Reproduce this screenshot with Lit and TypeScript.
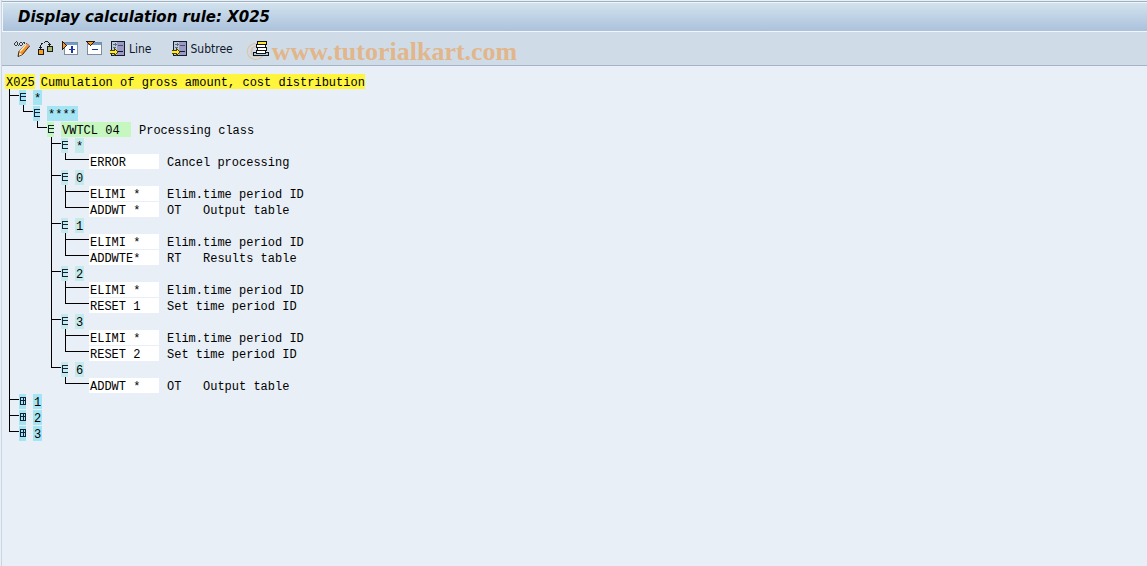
import { LitElement, html, css, svg, nothing } from "lit";
import { customElement, property, state } from "lit/decorators.js";

type Guide = "line" | "blank" | "tee" | "elbow";
interface TreeNode {
  id: string;
  label: string;
  note?: string;
  tone: "cyan" | "green" | "teal" | "leaf";
  open?: boolean;
  children?: TreeNode[];
}

const leaf = (id: string, label: string, note: string): TreeNode => ({ id, label, note, tone: "leaf" });
const group = (label: string, children: TreeNode[]): TreeNode => ({ id: "g" + label, label, tone: "teal", open: true, children });

const TREE: TreeNode[] = [
  {
    id: "all", label: "*", tone: "cyan", open: true, children: [
      {
        id: "wage", label: "****", tone: "cyan", open: true, children: [
          {
            id: "class", label: "VWTCL 04", note: "Processing class", tone: "green", open: true, children: [
              group("*", [leaf("a1", "ERROR", "Cancel processing")]),
              group("0", [leaf("b1", "ELIMI *", "Elim.time period ID"), leaf("b2", "ADDWT *", "OT   Output table")]),
              group("1", [leaf("c1", "ELIMI *", "Elim.time period ID"), leaf("c2", "ADDWTE*", "RT   Results table")]),
              group("2", [leaf("d1", "ELIMI *", "Elim.time period ID"), leaf("d2", "RESET 1", "Set time period ID")]),
              group("3", [leaf("e1", "ELIMI *", "Elim.time period ID"), leaf("e2", "RESET 2", "Set time period ID")]),
              group("6", [leaf("f1", "ADDWT *", "OT   Output table")]),
            ],
          },
        ],
      },
    ],
  },
  { id: "n1", label: "1", tone: "cyan", children: [] },
  { id: "n2", label: "2", tone: "cyan", children: [] },
  { id: "n3", label: "3", tone: "cyan", children: [] },
];

const ICONS: Record<string, unknown> = {
  edit: svg`
    <path d="M2 0h1v1h-1zM1 1h1v1h-1zM0 2h1v2h-1zM1 4h2v1h-2zM3 1h1v3h-1zM4 4h1v1h-1zM5 2h1v2h-1zM6 1h2v1h-2zM8 2h1v2h-1zM6 4h2v1h-2zM9 1h2v1h-2zM10 2h1v1h-1z" fill="#3b3b3b"/>
    <path d="M12.500 2.500l3 2.500-7 8.500-4.500 2 1-5z" fill="#f79325" stroke="#3a2210" shape-rendering="auto"/>
    <path d="M6 10.500l6.500-7.500" stroke="#ffeab8" stroke-width="1.500" fill="none" shape-rendering="auto"/>
    <path d="M12 3.500l1-1 2 2-1 1.500z" fill="#ee8f7c" shape-rendering="auto"/>
    <path d="M5.500 11.500l2.500 2-3 1.200z" fill="#fbeccb" shape-rendering="auto"/>`,
  swap: svg`
    <rect x=".5" y="8.500" width="5" height="5" fill="#f7a020" stroke="#1a1a1a"/>
    <rect x="9.500" y="5.500" width="5" height="5" fill="#a9b86c" stroke="#1a1a1a"/>
    <path d="M2 5h1v1h1v1h-1v1h-1v-1h-1v-1h1zM2 4h1v1h-1zM3 2h1v2h-1zM4 2h1v1h-1zM6 1h1v1h-1zM7 0h3v1h-3zM10 1h1v1h-1zM11 2h1v1h-1zM10 3h3v1h-3zM11 4h1v1h-1z" fill="#1a1a1a"/>`,
  expand: svg`
    <rect x="2.500" y="1.500" width="13" height="12" fill="#fff" stroke="#7d8da0"/>
    <rect x="3" y="2" width="12" height="2" fill="#6f9bd2"/>
    <path d="M9 5h2v3h2v1h-2v3h-2v-3h-2v-1h2z" fill="#1d35a8"/>
    <path d="M0 0h1v1h1v1h1v1h1v1h1v1h-1v1h-1v1h-1v1h-1v1h-1z" fill="#2a1b08"/>
    <path d="M1 2h1v1h1v1h1v1h-1v1h-1v1h-1z" fill="#f79a28"/>`,
  collapse: svg`
    <rect x="1.500" y="1.500" width="14" height="12" fill="#fff" stroke="#7d8da0"/>
    <rect x="2" y="2" width="13" height="2" fill="#6f9bd2"/>
    <rect x="6" y="8" width="6" height="1" fill="#1d35a8"/>
    <path d="M0 0h9v1h-1v1h-1v1h-1v1h-1v1h-1v-1h-1v-1h-1v-1h-1v-1h-1z" fill="#2a1b08"/>
    <path d="M2 1h5v1h-1v1h-1v1h-1v-1h-1v-1h-1z" fill="#f79a28"/>`,
  insert: svg`
    <rect x="1" y="0" width="14" height="15" fill="#16182c"/>
    <rect x="2" y="1" width="5" height="13" fill="#bccbdc"/>
    <rect x="7" y="1" width="7" height="13" fill="#9a9ac4"/>
    <path d="M8 10h5v1h-5z" fill="#16182c"/>
    <path d="M8 4h5v1h-5z" fill="#4a4c74"/>
    <path d="M3 3h2v-1h1v1h1v1h-1v1h-1v-1h-2zM3 6h3v1h-3z" fill="#5f6a78"/>
    <path d="M0 9h4v-2h1v1h1v1h1v1h1v2h-1v1h-1v1h-1v1h-1v-2h-4z" fill="#4b4100"/>
    <path d="M0 10h5v-1h1v1h1v2h-1v1h-1v-1h-5z" fill="#ffe92e"/>`,
  stack: svg`
    <rect x="4.500" y=".5" width="9" height="3" fill="#ffe23a" stroke="#111"/>
    <rect x="3.500" y="3.500" width="9" height="3" fill="#fff" stroke="#111"/>
    <rect x="4.500" y="6.500" width="9" height="3" fill="#fff" stroke="#111"/>
    <rect x="3.500" y="9.500" width="9" height="3" fill="#fff" stroke="#111"/>
    <path d="M3.500 11.500h-3v3h15v-3h-3v1h-9z" fill="#a9cdea" stroke="#111"/>`,
};

@customElement("tool-button")
class ToolButton extends LitElement {
  @property() icon = "";
  @property() name = "";
  @property() text = "";
  static styles = css`
    :host { display: block; }
    .btn {
      display: flex; align-items: center; gap: 3px; height: 20px; margin: 0; padding: 0;
      border: 0; background: none; color: #10182c;
      font: 12px/16px "DejaVu Sans Condensed", "DejaVu Sans", sans-serif; cursor: pointer;
    }
    .glyph { display: block; width: 16px; height: 16px; }
  `;
  render() {
    return html`<button class="btn" type="button" aria-label=${this.name} title=${this.name}>
      <svg class="glyph" viewBox="0 0 16 16" shape-rendering="crispEdges" aria-hidden="true">${ICONS[this.icon]}</svg>${this.text ? html`<span>${this.text}</span>` : nothing}
    </button>`;
  }
}

@customElement("rule-tree")
class RuleTree extends LitElement {
  @state() private toggled = new Set<string>();
  static styles = css`
    :host { display: block; font: 12px/16px "Liberation Mono", "Courier New", monospace; color: #000; }
    .root { display: flex; gap: 5px; padding-left: 5px; line-height: 18px; }
    .root-part { height: 15px; padding-left: 1px; background: #fff53d; white-space: pre; }
    .rows { list-style: none; margin: 0; padding: 0 0 0 9px; }
    .row { display: flex; height: 16px; align-items: flex-end; }
    .guide { flex: none; width: 14px; height: 16px; background: no-repeat linear-gradient(#000, #000) 0 0 / 0 0; }
    .line { background-size: 1px 16px; }
    .tee, .elbow {
      width: 10px;
      background-image: linear-gradient(#000, #000), linear-gradient(#000, #000);
      background-position: 0 0, 0 6px;
      background-size: 1px 16px, 100% 1px;
    }
    .elbow { background-size: 1px 7px, 100% 1px; }
    .to-leaf { width: 24px; }
    .toggle { flex: none; width: 7px; height: 15px; margin: 0 7px 0 0; padding: 0; border: 0; display: block; cursor: pointer; }
    .toggle-glyph { display: block; width: 7px; height: 15px; }
    .label { flex: none; height: 15px; box-sizing: border-box; line-height: 18px; padding: 0 1px; white-space: pre; min-width: 9px; }
    .cyan { background: #a5e4f3; }
    .teal { background: #c4eaec; }
    .green { background: #c5f7bf; }
    .leaf { background: #fff; width: 70px; }
    .label.green { width: 70px; }
    .note { height: 15px; line-height: 18px; padding-left: 8px; white-space: pre; }
  `;
  private isOpen(n: TreeNode) {
    return !!n.open !== this.toggled.has(n.id);
  }
  private toggle(n: TreeNode) {
    const next = new Set(this.toggled);
    if (!next.delete(n.id)) next.add(n.id);
    this.toggled = next;
  }
  private rows(nodes: TreeNode[], guides: Guide[]): unknown[] {
    return nodes.flatMap((n, i) => {
      const last = i === nodes.length - 1;
      const open = this.isOpen(n);
      const row = html`<li class="row">
        ${guides.map((g) => html`<span class="guide ${g}"></span>`)}<span class="guide ${last ? "elbow" : "tee"} ${n.children ? "" : "to-leaf"}"></span>
        ${n.children
          ? html`<button class="toggle ${n.tone}" type="button" aria-expanded=${open ? "true" : "false"} aria-label=${n.label} @click=${() => this.toggle(n)}>
              <svg class="toggle-glyph" viewBox="0 0 7 15" shape-rendering="crispEdges" aria-hidden="true">
                <path d=${"M1 3h6v1h-6zM1 10h6v1h-6zM1 4h1v6h-1zM2 6h5v1h-5z" + (open ? "" : "M4 4h1v6h-1zM6 4h1v6h-1z")} fill="#12203a"/>
              </svg>
            </button>`
          : nothing}
        <span class="label ${n.tone}">${n.label}</span>${n.note ? html`<span class="note">${n.note}</span>` : nothing}
      </li>`;
      return n.children && open ? [row, ...this.rows(n.children, [...guides, last ? "blank" : "line"])] : [row];
    });
  }
  render() {
    return html`
      <div class="root"><span class="root-part">X025</span><span class="root-part">Cumulation of gross amount, cost distribution</span></div>
      <ul class="rows">${this.rows(TREE, [])}</ul>`;
  }
}

@customElement("app-root")
class AppRoot extends LitElement {
  static styles = css`
    :host { display: block; min-height: 100vh; box-sizing: border-box; background: #e8eff6; border-left: 1px solid #e8eff6; }
    .page { border-left: 1px solid #cbd5e1; min-height: 100vh; box-sizing: border-box; padding-top: 1px; }
    .bars { border-top: 1px solid #9eb0c0; }
    .title-bar {
      border: 1px solid #f2f6fa; border-width: 1px 0 1px 1px; box-sizing: border-box;
      background: linear-gradient(#d2e2ee, #abc2dc); padding-left: 15px;
    }
    .title { margin: 0; font: italic bold 15px/28px "DejaVu Sans", sans-serif; color: #000; }
    .toolbar {
      position: relative; display: flex; align-items: center; box-sizing: border-box; height: 34px;
      padding: 0 0 0 12px; background: #cfdce7; border-bottom: 1px solid #a3b5c5;
    }
    .tools { position: relative; display: flex; gap: 8px; }
    .wide { margin-left: 12px; }
    .watermark {
      position: absolute; left: 244px; top: 4px; display: flex; gap: 6px; pointer-events: none;
      font: bold 26px/32px "Liberation Serif", serif; color: #e2b68b; white-space: nowrap;
    }
    .mark { font-weight: normal; opacity: .7; }
    .tree { padding-top: 8px; margin-left: -2px; }
  `;
  render() {
    return html`
      <div class="page">
        <div class="bars">
          <header class="title-bar"><h1 class="title">Display calculation rule: X025</h1></header>
          <div class="toolbar">
            <div class="watermark"><span class="mark">©</span><span>www.tutorialkart.com</span></div>
            <div class="tools" role="toolbar" aria-label="Rule tools">
              <tool-button icon="edit" name="Display or change"></tool-button>
              <tool-button icon="swap" name="Other rule"></tool-button>
              <tool-button icon="expand" name="Expand"></tool-button>
              <tool-button icon="collapse" name="Collapse"></tool-button>
              <tool-button icon="insert" name="Line" text="Line"></tool-button>
              <tool-button class="wide" icon="insert" name="Subtree" text="Subtree"></tool-button>
              <tool-button class="wide" icon="stack" name="Stack"></tool-button>
            </div>
          </div>
        </div>
        <main class="tree"><rule-tree></rule-tree></main>
      </div>`;
  }
}
